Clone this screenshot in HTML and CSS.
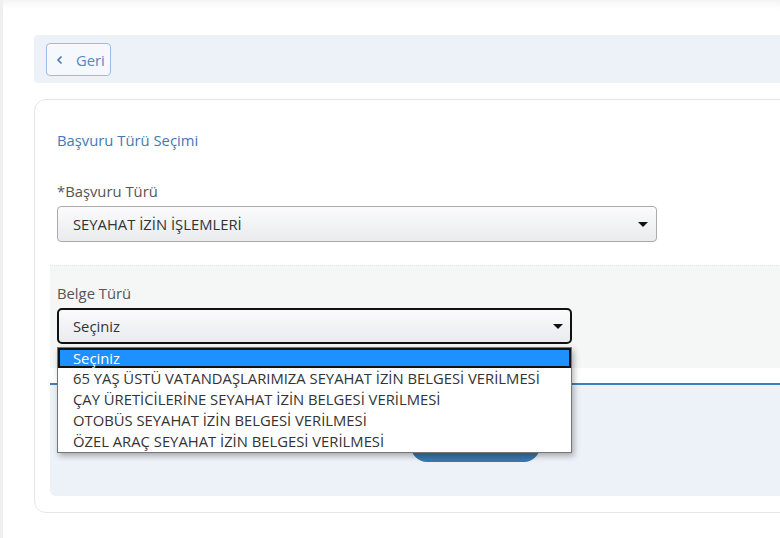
FILE: index.html
```html
<!DOCTYPE html>
<html lang="tr">
<head>
    <meta charset="UTF-8">
    <meta name="viewport" content="width=device-width, initial-scale=1.0">
    <title>Başvuru Türü Seçimi</title>
    <link rel="stylesheet" href="styles.css">
</head>
<body>
    <div class="page">
        <!-- Geri bar -->
        <div class="back-bar">
            <button class="back-btn" type="button">
                <svg class="back-icon" width="8" height="10" viewBox="0 0 8 10">
                    <polyline points="5.5,1.5 2,5 5.5,8.5" fill="none" stroke="#4a78b2" stroke-width="1.6"/>
                </svg>
                <span>Geri</span>
            </button>
        </div>

        <!-- Form card -->
        <div class="card">
            <div class="block">
                <div class="card-title">Başvuru Türü Seçimi</div>
                <div class="field-label">*Başvuru Türü</div>
                <div class="select select-wide">
                    <span>SEYAHAT İZİN İŞLEMLERİ</span>
                    <i class="caret"></i>
                </div>
            </div>

            <div class="block block-gray">
                <div class="field-label">Belge Türü</div>
                <div class="select-wrap">
                    <div class="select select-focus">
                        <span>Seçiniz</span>
                        <i class="caret"></i>
                    </div>
                    <!-- Open option list -->
                    <ul class="options">
                        <li class="option selected">Seçiniz</li>
                        <li class="option">65 YAŞ ÜSTÜ VATANDAŞLARIMIZA SEYAHAT İZİN BELGESİ VERİLMESİ</li>
                        <li class="option">ÇAY ÜRETİCİLERİNE SEYAHAT İZİN BELGESİ VERİLMESİ</li>
                        <li class="option">OTOBÜS SEYAHAT İZİN BELGESİ VERİLMESİ</li>
                        <li class="option">ÖZEL ARAÇ SEYAHAT İZİN BELGESİ VERİLMESİ</li>
                    </ul>
                </div>
            </div>

            <div class="actions">
                <button class="primary-btn" type="button">Devam</button>
            </div>
        </div>
    </div>
</body>
</html>
```

FILE: styles.css
```css
html, body {
    margin: 0;
    padding: 0;
    overflow: hidden;
}

body {
    background-color: #efefef;
    font-family: 'Open Sans', 'Noto Sans', sans-serif;
    font-size: 14.8px;
    color: #333;
}

.page {
    margin-left: 3px;
    min-height: 538px;
    padding: 35px 0 0 31px;
    background-color: #fff;
    box-shadow: inset 0 10px 10px -8px rgba(0, 0, 0, 0.07);
    box-sizing: border-box;
}

/* Back bar */
.back-bar {
    margin-right: -40px;
    height: 48px;
    padding: 8px 12px;
    box-sizing: border-box;
    background-color: #edf2f9;
    border-radius: 4px;
}

.back-btn {
    display: flex;
    align-items: center;
    gap: 12px;
    height: 33px;
    width: 65px;
    padding: 0 0 0 9px;
    background-color: #f5f8fc;
    border: 1px solid #9dbde0;
    border-radius: 4px;
    font-family: inherit;
    font-size: 14.8px;
    color: #5a86be;
    box-sizing: border-box;
}

.back-icon {
    display: block;
}

/* Card */
.card {
    margin: 16px -40px 0 0;
    padding: 30px 0 16px 15px;
    border: 1px solid #e6e6e6;
    border-radius: 12px;
}

.block {
    padding: 0 7px;
}

.card-title {
    line-height: 20px;
    color: #3f7ab5;
    margin-bottom: 31px;
}

.field-label {
    line-height: 20px;
    color: #555;
    margin-bottom: 5px;
}

.select {
    position: relative;
    display: flex;
    align-items: center;
    height: 36px;
    padding-left: 15px;
    box-sizing: border-box;
    background: linear-gradient(#fbfbfc, #e9ebee);
    border: 1px solid #aaa;
    border-radius: 4px;
    color: #333;
}

.select-wide {
    width: 600px;
    margin-bottom: 23px;
}

.select-focus {
    width: 515px;
    border: 2px solid #111;
    padding-left: 14px;
    border-radius: 5px;
}

.caret {
    position: absolute;
    right: 8px;
    top: 15px;
    width: 0;
    height: 0;
    border-left: 5px solid transparent;
    border-right: 5px solid transparent;
    border-top: 5px solid #111;
}

.select-focus .caret {
    right: 7px;
    top: 14px;
}

/* Gray section */
.block-gray {
    padding-top: 17px;
    padding-bottom: 24px;
    background-color: #f5f6f6;
    border-top: 1px dotted #e2e4e4;
}

.select-wrap {
    position: relative;
}

.options {
    position: absolute;
    left: 0;
    top: 39px;
    z-index: 10;
    width: 515px;
    margin: 0;
    padding: 0;
    list-style: none;
    box-sizing: border-box;
    background-color: #fff;
    border: 1px solid #767676;
    box-shadow: 2px 3px 6px rgba(0, 0, 0, 0.3);
}

.option {
    height: 21px;
    line-height: 21px;
    padding-left: 15px;
    color: #333;
    white-space: nowrap;
}

.option.selected {
    height: 20px;
    line-height: 16px;
    padding-left: 13px;
    background-color: #1e90ff;
    border: 2px solid #111;
    box-sizing: border-box;
    color: #fff;
}

/* Actions */
.actions {
    margin-top: 15px;
    height: 113px;
    padding: 43px 0 0 361px;
    box-sizing: border-box;
    background-color: #edf1f8;
    border-top: 2px solid #3d80bf;
    border-radius: 0 0 0 6px;
}

.primary-btn {
    width: 129px;
    height: 34px;
    border: none;
    border-radius: 16px;
    background-color: #3b77ae;
    color: #fff;
    font-family: inherit;
    font-size: 14.8px;
}
```
